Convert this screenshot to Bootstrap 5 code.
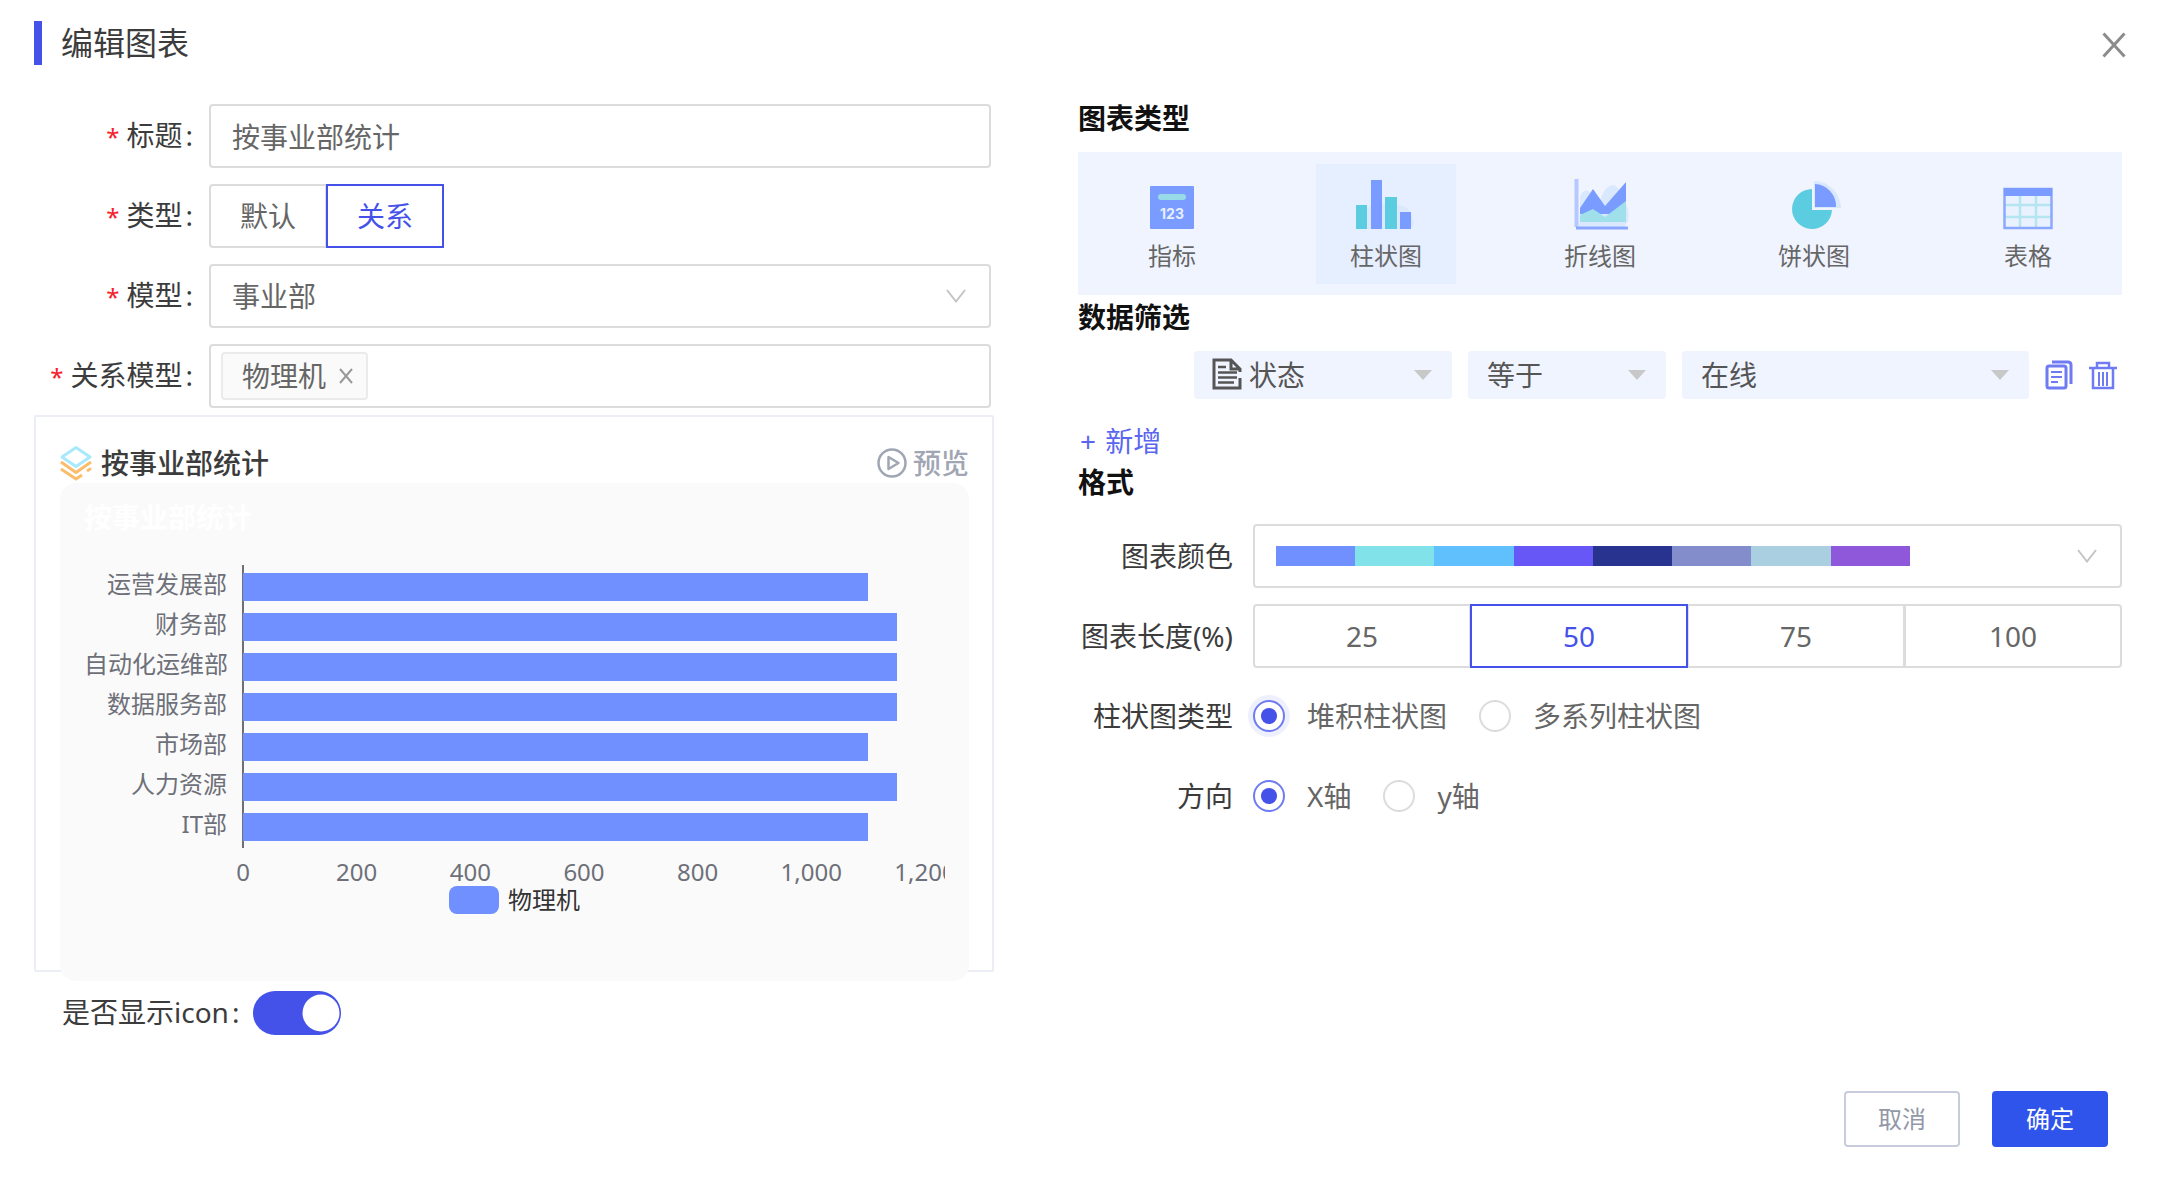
<!DOCTYPE html>
<html lang="zh-CN">
<head>
<meta charset="utf-8">
<meta name="viewport" content="width=device-width, initial-scale=1">
<title>编辑图表</title>
<link rel="stylesheet" href="https://cdn.jsdelivr.net/npm/bootstrap@5.3.0/dist/css/bootstrap.min.css">
<style>
:root{--brand:#4552ea;--line:#dcdcdc;--soft:#f0f4ff}
body{font-family:"Noto Sans","Noto Sans CJK SC",sans-serif;font-size:28px;line-height:28px;color:#3c3c3c;background:#fff}
.dlg-head{padding:21px 34px 0}
.dlg-title{font-size:32px;line-height:44px;border-left:8px solid var(--brand);padding-left:19px;font-weight:400}
.dlg-body{padding:39px 39px 0 34px;gap:84px}
.pane-left{flex:960 1 0;min-width:0}
.pane-right{flex:1044 1 0;min-width:0}
.icon-btn{background:none;border:0;padding:0;line-height:0}
.left-fields{gap:16px;padding-right:3px}
.left-label{width:175px;flex:none;text-align:right;padding-right:16px;white-space:nowrap}
.left-label i{color:#f5222d;font-style:normal;font-size:24px;margin-right:7px}
.left-label b,.switch-label b{font-weight:400;margin-left:3px}
.field{height:64px;border:2px solid var(--line);border-radius:4px;font-size:28px;line-height:28px;color:#666;background-color:#fff;padding:0 21px}
.form-select.field{background-image:url("data:image/svg+xml,%3Csvg xmlns='http://www.w3.org/2000/svg' viewBox='0 0 20 14'%3E%3Cpath d='M1 1l9 11.500L19 1' fill='none' stroke='%23c4c4c4' stroke-width='2'/%3E%3C/svg%3E");background-size:20px 14px;background-position:right 23px center}
.pick .btn{height:64px;border:2px solid var(--line);border-radius:4px;font-size:28px;line-height:28px;color:#666;padding:16px 29px;background:#fff}
.pick-even .btn{flex:1 0 0;padding:16px 0}
.pick .btn-check:checked+.btn{color:var(--brand);border-color:var(--brand);border-radius:0;background:#fff}
.tag-box{padding:0 10px}
.tag-item{height:48px;background:#fafafa;border:2px solid #ebebeb;border-radius:4px;padding:0 12px 0 19px;gap:12px}
.tag-box input{border:0;outline:0;min-width:0;background:none}
.preview-card{border:2px solid #eceef5;border-radius:2px;margin-top:7px;padding:0 23px 0 24px;height:557px}
.preview-head{height:66px;padding-top:28px}
.preview-head h2{font-size:28px;line-height:34px;font-weight:500;margin:0 0 0 9px}
.preview-btn{color:#a0a6b3;font-weight:500;gap:6px;padding-top:3px}
.chart-area{background:#fafafa;border-radius:16px;height:498px;margin-bottom:-8px;padding:0 24px;font-size:24px;line-height:24px;color:#6e7079}
.chart-clip{overflow:hidden;padding-bottom:20px}
.chart-title{color:#fff;font-size:28px;line-height:28px;font-weight:700;padding:20px 0 34px}
.plot{margin-right:20px;background:linear-gradient(#6e7079,#6e7079) 158px 0/2px 100% no-repeat;padding:2px 0 1px}
.plot-row{height:40px}
.plot-row span{width:143px;margin-right:16px;text-align:right;flex:none;white-space:nowrap;padding-bottom:7px}
.plot-track{height:28px}
.plot-bar{height:28px;background:#7090ff}
.ticks{margin:12px 20px 0 159px}
.ticks span{width:0;display:flex;justify-content:center}
.legend-key{width:50px;height:28px;border-radius:8px;background:#7090ff}
.legend-row{color:#333;gap:9px;margin-top:2px}
.switch-row{margin:18px 0 0 28px;height:44px}
.switch-row .form-check-input{width:88px;height:44px;margin:2px 0 0 14px;background-color:var(--brand);border:0;float:none;background-size:40px;background-position:right 2px center;background-image:url("data:image/svg+xml,%3Csvg xmlns='http://www.w3.org/2000/svg' viewBox='-4 -4 8 8'%3E%3Ccircle r='3.7' fill='%23fff'/%3E%3C/svg%3E")}
.sec{font-size:28px;line-height:28px;font-weight:700;color:#111;margin:0}
.type-panel{background:var(--soft);padding:12px 24px;margin:20px 0 8px;height:143px}
.type-item{width:140px;height:120px;border:0;background:none;font-size:24px;line-height:28px;color:#666;padding:9px 0 0}
.type-item.on{background:#e6efff}
.type-item svg{display:block;margin-bottom:11px}
.filter-row{margin-top:20px;padding-left:116px}
.filter-row .form-select{height:48px;border:0;border-radius:4px;font-size:28px;line-height:28px;padding:0 44px 0 19px;color:#555;background-color:var(--soft);background-image:url("data:image/svg+xml,%3Csvg xmlns='http://www.w3.org/2000/svg' viewBox='0 0 18 10'%3E%3Cpath d='M0 0h18L9 10z' fill='%23c8c8c8'/%3E%3C/svg%3E");background-size:18px 10px;background-position:right 20px center}
.f1{flex:258 1 0;margin-right:16px;position:relative}
.f2{flex:198 1 0;margin-right:16px}
.f3{flex:347 1 0;margin-right:16px}
.filter-row .f1 .form-select{padding-left:55px}
.f1 svg{position:absolute;left:17px;top:6px;pointer-events:none}
.row-tools{gap:16px;padding-right:5px}
.add-link{display:inline-block;color:#5a66f0;text-decoration:none;margin:28px 0 13px 2px}
.add-link span{margin-right:2px}
.fmt{gap:16px;margin-top:28px}
.fmt-label{width:175px;flex:none;text-align:right;padding-right:20px;white-space:nowrap}
.swatches{height:20px;width:77%}
.swatches span{flex:1}
.radio-row{height:64px;color:#666}
.radio-row .form-check-input{width:32px;height:32px;margin:0;border:2px solid #dcdcdc;flex:none;float:none}
.radio-row .form-check-input:checked{border-color:#6f7bf2;background-color:#fff;background-image:url("data:image/svg+xml,%3Csvg xmlns='http://www.w3.org/2000/svg' viewBox='-8 -8 16 16'%3E%3Ccircle r='4.6' fill='%234552ea'/%3E%3C/svg%3E")}
.radio-row .halo{box-shadow:0 0 0 5px #eff0fe}
.radio-row label{margin:0 32px 0 22px}
.dlg-foot{padding:0 53px 41px;gap:32px;margin-top:57px}
.dlg-foot .btn{width:116px;height:56px;border-radius:4px;font-size:24px;line-height:24px;padding:0;border-width:2px}
.btn-quit{border-color:#c9ccdc;color:#9398a8;background:#fff}
.btn-ok{background:#2f54eb;border-color:#2f54eb;color:#fff}
</style>
<script src="https://cdn.jsdelivr.net/npm/bootstrap@5.3.0/dist/js/bootstrap.bundle.min.js"></script>
</head>
<body>
<header class="dlg-head d-flex justify-content-between align-items-center">
  <h1 class="dlg-title m-0">编辑图表</h1>
  <button type="button" class="icon-btn pt-1" aria-label="关闭"><svg width="26" height="26" viewBox="0 0 26 26"><path d="M2.500 1.500l21 23M23.500 1.500l-21 23" stroke="#8c8c8c" stroke-width="3" fill="none"/></svg></button>
</header>
<main class="dlg-body d-flex">
  <section class="pane-left">
    <div class="left-fields d-flex flex-column">
      <div class="d-flex align-items-center">
        <label class="left-label" for="title"><i>*</i>标题<b>:</b></label>
        <input id="title" class="form-control field" value="按事业部统计">
      </div>
      <div class="d-flex align-items-center">
        <span class="left-label"><i>*</i>类型<b>:</b></span>
        <div class="btn-group pick" role="group" aria-label="类型">
          <input type="radio" class="btn-check" name="kind" id="k1"><label class="btn" for="k1">默认</label>
          <input type="radio" class="btn-check" name="kind" id="k2" checked><label class="btn" for="k2">关系</label>
        </div>
      </div>
      <div class="d-flex align-items-center">
        <label class="left-label" for="model"><i>*</i>模型<b>:</b></label>
        <select id="model" class="form-select field"><option>事业部</option></select>
      </div>
      <div class="d-flex align-items-center">
        <label class="left-label" for="rel"><i>*</i>关系模型<b>:</b></label>
        <div class="field tag-box d-flex align-items-center flex-grow-1">
          <span class="tag-item d-flex align-items-center">物理机<button type="button" class="icon-btn" aria-label="移除"><svg width="16" height="16" viewBox="0 0 16 16"><path d="M2 1l12 14M14 1L2 15" stroke="#999" stroke-width="2" fill="none"/></svg></button></span>
          <input id="rel" class="flex-grow-1">
        </div>
      </div>
    </div>
    <div class="preview-card">
      <div class="preview-head d-flex justify-content-between align-items-start">
        <div class="d-flex align-items-center">
          <svg width="32" height="36" viewBox="0 0 32 36" fill="none" stroke-width="3" stroke-linejoin="round"><path d="M16 2.500L30 12 16 21.500 2 12z" stroke="#a8eafc"/><path d="M1 17l15 10.500L31 17" stroke="#fbbd6c"/><path d="M1 24l15 10 6-4M27 26l4-2.500" stroke="#fbbd6c"/></svg>
          <h2>按事业部统计</h2>
        </div>
        <button type="button" class="icon-btn preview-btn d-flex align-items-center"><svg width="30" height="30" viewBox="0 0 30 30" fill="none" stroke="#a0a6b3" stroke-width="2.500"><circle cx="15" cy="15" r="13.500"/><path d="M11.500 9v12l10-6z" stroke-linejoin="round"/></svg><span class="lh-1">预览</span></button>
      </div>
      <div class="chart-area">
        <div class="chart-clip">
          <div class="chart-title">按事业部统计</div>
          <div class="plot">
            <div class="plot-row d-flex align-items-center"><span>运营发展部</span><div class="plot-track flex-grow-1"><div class="plot-bar" style="width:91.7%"></div></div></div>
            <div class="plot-row d-flex align-items-center"><span>财务部</span><div class="plot-track flex-grow-1"><div class="plot-bar" style="width:95.9%"></div></div></div>
            <div class="plot-row d-flex align-items-center"><span>自动化运维部</span><div class="plot-track flex-grow-1"><div class="plot-bar" style="width:95.9%"></div></div></div>
            <div class="plot-row d-flex align-items-center"><span>数据服务部</span><div class="plot-track flex-grow-1"><div class="plot-bar" style="width:95.9%"></div></div></div>
            <div class="plot-row d-flex align-items-center"><span>市场部</span><div class="plot-track flex-grow-1"><div class="plot-bar" style="width:91.7%"></div></div></div>
            <div class="plot-row d-flex align-items-center"><span>人力资源</span><div class="plot-track flex-grow-1"><div class="plot-bar" style="width:95.9%"></div></div></div>
            <div class="plot-row d-flex align-items-center"><span>IT部</span><div class="plot-track flex-grow-1"><div class="plot-bar" style="width:91.7%"></div></div></div>
          </div>
          <div class="ticks d-flex justify-content-between"><span>0</span><span>200</span><span>400</span><span>600</span><span>800</span><span>1,000</span><span>1,200</span></div>
          <div class="legend-row d-flex justify-content-center align-items-center"><span class="legend-key"></span><span>物理机</span></div>
        </div>
      </div>
    </div>
    <div class="switch-row form-switch d-flex align-items-center p-0">
      <label class="switch-label" for="showIcon">是否显示icon<b>:</b></label>
      <input class="form-check-input" type="checkbox" role="switch" id="showIcon" checked>
    </div>
  </section>
  <section class="pane-right">
    <h2 class="sec">图表类型</h2>
    <div class="type-panel d-flex justify-content-between">
      <button type="button" class="type-item d-flex flex-column align-items-center"><svg width="64" height="58" viewBox="0 0 64 58"><rect x="10" y="13" width="44" height="43" rx="1" fill="#7a9bff"/><rect x="18" y="21" width="28" height="6" rx="3" fill="#98dbe8"/><text x="32" y="46" text-anchor="middle" font-family="Inter,sans-serif" font-size="14" font-weight="700" fill="#e6efff">123</text></svg>指标</button>
      <button type="button" class="type-item on d-flex flex-column align-items-center"><svg width="64" height="58" viewBox="0 0 64 58"><path d="M8 44q6-12 14-14l24 2q12 2 14 20l-6 4H8z" fill="#dce9fc"/><path d="M2 32h11v24H2z" fill="#5ccde0"/><path d="M17 7h11v49H17z" fill="#7a9bff"/><path d="M31 24h12v32H31z" fill="#5ccde0"/><path d="M46 39h11v17H46z" fill="#7a9bff"/></svg>柱状图</button>
      <button type="button" class="type-item d-flex flex-column align-items-center"><svg width="64" height="58" viewBox="0 0 64 58"><path d="M12 36V24q3-8 8-6l12 10q4-14 12-16 6 0 8 8l6 12q4 6 2 16l-4 6H11z" fill="#d9e8fd"/><path d="M12 40V35L25 16l12 17L58 9v32H12z" fill="#7a9bff"/><path d="M12 49v-7l13-6 12 8 21-16v21z" fill="#a0e0ea"/><path d="M8.500 6v48" stroke="#b5c8ff" stroke-width="4"/><path d="M8 55h52" stroke="#8aa6ff" stroke-width="3"/></svg>折线图</button>
      <button type="button" class="type-item d-flex flex-column align-items-center"><svg width="64" height="58" viewBox="0 0 64 58"><path d="M32 8a27 27 0 0 1 27 27H32z" fill="#d9e8fd"/><path d="M30 16v21h20a20 20 0 1 1-20-21z" fill="#5ccde0"/><path d="M33 11a22 22 0 0 1 21 23H33z" fill="#7a9bff"/></svg>饼状图</button>
      <button type="button" class="type-item d-flex flex-column align-items-center"><svg width="64" height="58" viewBox="0 0 64 58"><rect x="8" y="15" width="48" height="41" fill="#e9f2fe"/><path d="M8 32h48M8 44h48M24 20v36M40 20v36" stroke="#b5e5f0" stroke-width="2.500"/><rect x="8.500" y="16" width="47" height="39" fill="none" stroke="#8aa8ff" stroke-width="2.500"/><path d="M8 15h48v8H8z" fill="#7a9bff"/></svg>表格</button>
    </div>
    <h2 class="sec">数据筛选</h2>
    <div class="filter-row d-flex align-items-center">
      <div class="f1"><select class="form-select" aria-label="字段"><option>状态</option></select><svg width="32" height="34" viewBox="0 0 32 34" fill="none" stroke="#555" stroke-width="3"><path d="M29 21v10H3V3h17l9 9v3M20 3v9h9"/><path d="M7 10h8M7 15.500h19M7 20.500h19M7 25.500h16" stroke-width="2.500"/></svg></div>
      <div class="f2"><select class="form-select" aria-label="条件"><option>等于</option></select></div>
      <div class="f3"><select class="form-select" aria-label="值"><option>在线</option></select></div>
      <div class="row-tools d-flex">
        <button type="button" class="icon-btn" aria-label="复制"><svg width="28" height="30" viewBox="0 0 28 30" fill="none" stroke="#6f7bf2" stroke-width="3"><rect x="2" y="6" width="19" height="22" rx="2"/><path d="M7 2h16q3 0 3 3v19"/><path d="M6 12h11M6 17h11M6 22h7" stroke-width="2"/></svg></button>
        <button type="button" class="icon-btn" aria-label="删除"><svg width="28" height="30" viewBox="0 0 28 30" fill="none" stroke="#6f7bf2" stroke-width="2.500"><path d="M0 8h28M8 7V3h12v4M4 8v20h20V8"/><path d="M10 12v14M14 12v14M18 12v14" stroke-width="2"/></svg></button>
      </div>
    </div>
    <a href="#" class="add-link"><span>+</span> 新增</a>
    <h2 class="sec">格式</h2>
    <div class="fmt d-flex flex-column">
      <div class="d-flex align-items-center">
        <span class="fmt-label" id="colorLabel">图表颜色</span>
        <button type="button" class="form-select field text-start" aria-labelledby="colorLabel">
          <span class="swatches d-flex"><span style="background:#7090ff"></span><span style="background:#81e2ea"></span><span style="background:#60c0fd"></span><span style="background:#6757f7"></span><span style="background:#27338f"></span><span style="background:#838dcb"></span><span style="background:#aacfe1"></span><span style="background:#8f57da"></span></span>
        </button>
      </div>
      <div class="d-flex align-items-center">
        <span class="fmt-label">图表长度(%)</span>
        <div class="btn-group pick pick-even flex-grow-1" role="group" aria-label="图表长度(%)">
          <input type="radio" class="btn-check" name="len" id="l1"><label class="btn" for="l1">25</label>
          <input type="radio" class="btn-check" name="len" id="l2" checked><label class="btn" for="l2">50</label>
          <input type="radio" class="btn-check" name="len" id="l3"><label class="btn" for="l3">75</label>
          <input type="radio" class="btn-check" name="len" id="l4"><label class="btn" for="l4">100</label>
        </div>
      </div>
      <div class="d-flex align-items-center">
        <span class="fmt-label">柱状图类型</span>
        <div class="radio-row d-flex align-items-center">
          <input class="form-check-input halo" type="radio" name="bar" id="b1" checked><label for="b1">堆积柱状图</label>
          <input class="form-check-input" type="radio" name="bar" id="b2"><label for="b2">多系列柱状图</label>
        </div>
      </div>
      <div class="d-flex align-items-center">
        <span class="fmt-label">方向</span>
        <div class="radio-row d-flex align-items-center">
          <input class="form-check-input" type="radio" name="dir" id="d1" checked><label for="d1">X轴</label>
          <input class="form-check-input" type="radio" name="dir" id="d2"><label for="d2">y轴</label>
        </div>
      </div>
    </div>
  </section>
</main>
<footer class="dlg-foot d-flex justify-content-end">
  <button type="button" class="btn btn-quit">取消</button>
  <button type="button" class="btn btn-ok">确定</button>
</footer>
</body>
</html>
